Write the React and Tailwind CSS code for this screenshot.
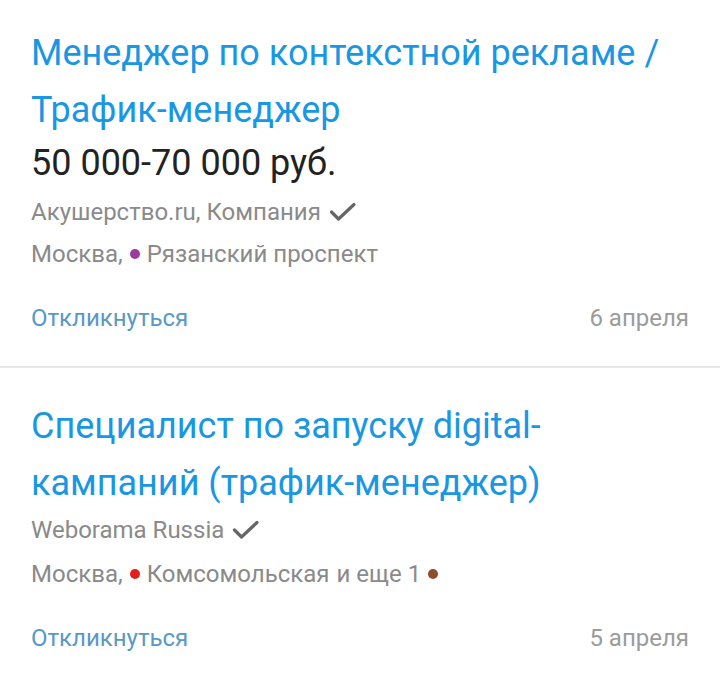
import React from 'react';

const jobs = [
  {
    id: 1,
    title: 'Менеджер по контекстной рекламе / Трафик-менеджер',
    salary: '50 000-70 000 руб.',
    company: 'Акушерство.ru, Компания',
    city: 'Москва,',
    metro: [{ name: 'Рязанский проспект', color: 'bg-[#9c3c9c]' }],
    date: '6 апреля',
  },
  {
    id: 2,
    title: 'Специалист по запуску digital-кампаний (трафик-менеджер)',
    company: 'Weborama Russia',
    city: 'Москва,',
    metro: [{ name: 'Комсомольская', color: 'bg-[#e2211c]' }],
    more: { text: 'и еще 1', color: 'bg-[#8b4f2e]' },
    date: '5 апреля',
  },
];

function Check() {
  return (
    <svg width="28" height="20" viewBox="0 0 28 20" className="ml-[8px] shrink-0">
      <path d="M2.5 10 L9.5 17 L25 2.5" fill="none" stroke="#666" strokeWidth="3.2" strokeLinecap="round" strokeLinejoin="round" />
    </svg>
  );
}

function Dot({ color }) {
  return <span className={`inline-block w-[10px] h-[10px] rounded-full ${color} mx-[7px]`} />;
}

function JobCard({ job, first }) {
  return (
    <div className={`px-[31px] ${first ? 'pt-[25px]' : 'pt-[30px]'} pb-[27px]`}>
      <div className="text-[36px] leading-[57px] text-[#1a97e2]">{job.title}</div>
      {job.salary && (
        <div className="text-[36px] leading-[48px] text-[#222]">{job.salary}</div>
      )}
      <div className={`flex items-center text-[24px] leading-[42px] text-[#8a8a8a] ${job.salary ? 'mt-[4px]' : '-mt-[3px]'}`}>
        {job.company}
        <Check />
      </div>
      <div className={`flex items-center text-[24px] leading-[42px] text-[#8a8a8a] ${job.salary ? '' : 'mt-[2px]'}`}>
        <span>{job.city}</span>
        {job.metro.map(m => (
          <span key={m.name} className="flex items-center">
            <Dot color={m.color} />
            <span>{m.name}</span>
          </span>
        ))}
        {job.more && (
          <span className="flex items-center">
            <span className="ml-[7px]">{job.more.text}</span>
            <Dot color={job.more.color} />
          </span>
        )}
      </div>
      <div className="flex items-center justify-between text-[24px] leading-[42px] mt-[22px]">
        <span className="text-[#5a98c6]">Откликнуться</span>
        <span className="text-[#9b9b9b]">{job.date}</span>
      </div>
    </div>
  );
}

export default function App() {
  return (
    <div className="w-[720px] h-[682px] bg-white overflow-hidden" style={{ fontFamily: 'Roboto, "Noto Sans", sans-serif' }}>
      {jobs.map((job, i) => (
        <div key={job.id} className={i === 0 ? 'border-b-2 border-[#e8e8e8]' : ''}>
          <JobCard job={job} first={i === 0} />
        </div>
      ))}
    </div>
  );
}
